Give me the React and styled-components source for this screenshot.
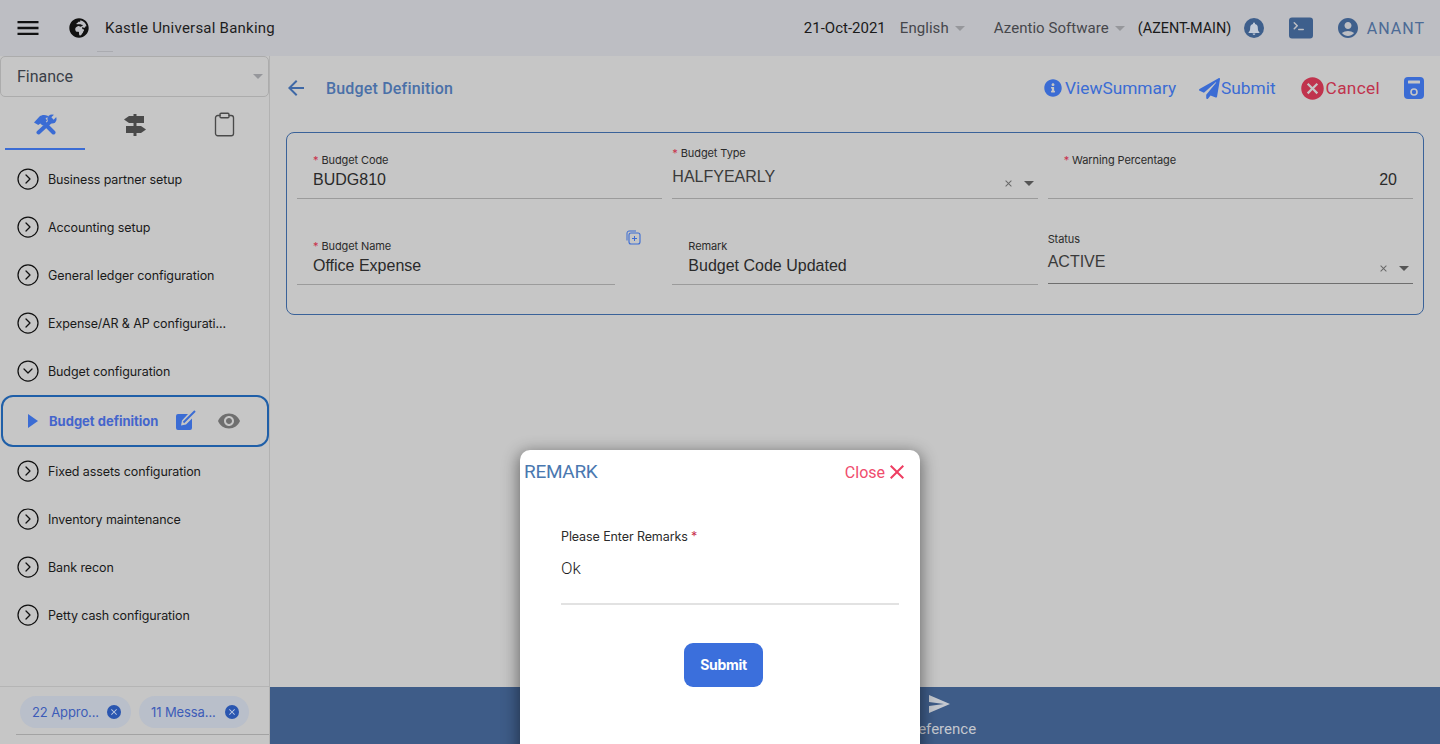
import React from "react";
import styled, { createGlobalStyle } from "styled-components";
import { FaGlobeAfrica, FaInfoCircle, FaPaperPlane } from "react-icons/fa";
import { MdMenu, MdCancel, MdVisibility, MdAccountCircle, MdSend, MdArrowBack, MdClose } from "react-icons/md";
import { BsTerminalFill } from "react-icons/bs";
import { CircleChevronRight, CircleChevronDown, Clipboard } from "lucide-react";

const Global = createGlobalStyle`
  html, body { margin: 0; padding: 0; height: 100%; overflow: hidden; }
  body { font-family: Roboto, "Liberation Sans", sans-serif; background: #c6c6c6; }
  * { box-sizing: border-box; }
`;

const menuTop = [
  "Business partner setup",
  "Accounting setup",
  "General ledger configuration",
  "Expense/AR & AP configurati...",
];
const menuBottom = [
  "Fixed assets configuration",
  "Inventory maintenance",
  "Bank recon",
  "Petty cash configuration",
];

function Caret() {
  return <CaretMark />;
}

function SaveIcon() {
  return (
    <svg width="22" height="24" viewBox="0 0 22 24">
      <rect x="1" y="1" width="20" height="22" rx="4" fill="#3b6cd4" />
      <rect x="5" y="4.5" width="12" height="3" rx="0.5" fill="#c6c6c6" />
      <circle cx="11" cy="16" r="3" fill="none" stroke="#c6c6c6" strokeWidth="1.6" />
    </svg>
  );
}

function EditIcon() {
  return (
    <svg width="22" height="22" viewBox="0 0 22 22">
      <path d="M3 4h10l-6 6.500-1 5 5-1 6-6V18a2 2 0 0 1-2 2H3a2 2 0 0 1-2-2V6a2 2 0 0 1 2-2z" fill="#3b6cd4" />
      <path d="M8.500 12.500 20 1" stroke="#3b6cd4" strokeWidth="2" fill="none" />
    </svg>
  );
}

function CopyAddIcon() {
  return (
    <svg width="15" height="15" viewBox="0 0 15 15" fill="none" stroke="#3b6cd4">
      <path d="M1 10.500V3a2 2 0 0 1 2-2h7" strokeWidth="1" />
      <rect x="3" y="3" width="11" height="11" rx="2" strokeWidth="1.100" />
      <path d="M8.500 6v5M6 8.500h5" strokeWidth="1" />
    </svg>
  );
}

// hammer crossed with an open wrench
function ToolsIcon() {
  return (
    <svg width="24" height="21" viewBox="0 0 24 21">
      <path d="M10 8 20.500 18.500" stroke="#3b6cd4" strokeWidth="4" strokeLinecap="round" />
      <path d="M1 8.500 6.500 2.500C9 .5 12 .5 15 2l.5 1.200-3 .8 1.500 2.500-4.500 5-2.200-2-2 1.500z" fill="#3b6cd4" />
      <path d="M18 7 5.500 18.500" stroke="#3b6cd4" strokeWidth="4" strokeLinecap="round" />
      <circle cx="19" cy="5" r="4.600" fill="#3b6cd4" />
      <path d="M19.500 4.500 23.500 .5" stroke="#c6c6c6" strokeWidth="3.200" />
    </svg>
  );
}

function SignsIcon() {
  return (
    <svg width="24" height="22" viewBox="0 0 24 22" fill="#4a4a4a">
      <rect x="10.500" y="0" width="3" height="22" />
      <path d="M1 5.500 6 2h15v7H6z" />
      <path d="M3 12h15l5 3.500-5 3.500H3z" />
    </svg>
  );
}

function ChipClose() {
  return (
    <ChipDot>
      <MdClose size={10} color="#c6d0e6" />
    </ChipDot>
  );
}

export default function App() {
  return (
    <Page>
      <Global />
      <Header>
        <MdMenu size={28} color="#111" />
        <Globe>
          <FaGlobeAfrica size={20} color="#111" />
        </Globe>
        <Brand>Kastle Universal Banking</Brand>
        <BrandTick />
        <HeaderRight>
          <DateText>21-Oct-2021</DateText>
          <HeaderSelect $width="94px">
            English
            <Caret />
          </HeaderSelect>
          <HeaderSelect $width="144px">
            Azentio Software
            <Caret />
          </HeaderSelect>
          <Branch>(AZENT-MAIN)</Branch>
          <BellDot>
            <svg width="12" height="13" viewBox="0 0 12 13">
              <path d="M6 0.500a1 1 0 0 1 1 1v.4a3.800 3.800 0 0 1 2.800 3.700c0 3 .6 3.800 1.600 4.700v.7H.6v-.7c1-.9 1.600-1.700 1.600-4.700A3.800 3.800 0 0 1 5 1.900v-.4a1 1 0 0 1 1-1zM4.600 11.500h2.800a1.400 1.400 0 0 1-2.800 0z" fill="#c3cbd8" />
            </svg>
          </BellDot>
          <TerminalIcon>
            <BsTerminalFill size={24} color="#3e5f8c" />
          </TerminalIcon>
          <MdAccountCircle size={24} color="#3e5f8c" />
          <UserName>ANANT</UserName>
        </HeaderRight>
      </Header>

      <Body>
        <Sidebar>
          <ModuleSelect>
            Finance
            <Caret />
          </ModuleSelect>
          <Tabs>
            <Tab $active $width="80px">
              <ToolsIcon />
            </Tab>
            <Tab $width="100px">
              <SignsIcon />
            </Tab>
            <Tab $width="78px">
              <Clipboard size={27} color="#4a4a4a" strokeWidth={1.2} />
            </Tab>
          </Tabs>
          <Menu>
            {menuTop.map((item) => (
              <MenuItem key={item}>
                <CircleChevronRight size={24} strokeWidth={1.25} color="#111" />
                {item}
              </MenuItem>
            ))}
            <MenuItem>
              <CircleChevronDown size={24} strokeWidth={1.25} color="#111" />
              Budget configuration
            </MenuItem>
            <ActiveItem>
              <PlayMark />
              <ActiveLabel>Budget definition</ActiveLabel>
              <EditIcon />
              <EyeSlot>
                <MdVisibility size={24} color="#6f6f6f" />
              </EyeSlot>
            </ActiveItem>
            {menuBottom.map((item) => (
              <MenuItem key={item}>
                <CircleChevronRight size={24} strokeWidth={1.25} color="#111" />
                {item}
              </MenuItem>
            ))}
          </Menu>
          <SideFooter>
            <Chips>
              <Chip $width="111px">
                22 Appro...
                <ChipClose />
              </Chip>
              <Chip $width="110px">
                11 Messa...
                <ChipClose />
              </Chip>
            </Chips>
            <FooterRule />
          </SideFooter>
        </Sidebar>

        <Main>
          <TitleRow>
            <BackSlot>
              <MdArrowBack size={24} color="#3e68a6" />
            </BackSlot>
            <Title>Budget Definition</Title>
            <Actions>
              <Action $gap="3px">
                <FaInfoCircle size={18} />
                ViewSummary
              </Action>
              <Action $gap="1px">
                <FaPaperPlane size={21} />
                Submit
              </Action>
              <Action $danger $gap="0px">
                <MdCancel size={27} color="#c0334d" />
                Cancel
              </Action>
              <SaveIcon />
            </Actions>
          </TitleRow>

          <Card>
            <Field>
              <Label $top="14px" $indent="16px">
                <Star>*</Star> Budget Code
              </Label>
              <Value $indent="16px">BUDG810</Value>
            </Field>
            <Field>
              <Label $top="7px">
                <Star>*</Star> Budget Type
              </Label>
              <SelectValue>HALFYEARLY</SelectValue>
              <SelectIcons>
                <MdClose size={11} color="#666" />
                <SmallCaret />
              </SelectIcons>
            </Field>
            <Field>
              <Label $top="14px" $indent="16px">
                <Star>*</Star> Warning Percentage
              </Label>
              <Value $right>20</Value>
            </Field>
            <Field $short>
              <Label $top="14px" $indent="16px">
                <Star>*</Star> Budget Name
              </Label>
              <Value $indent="16px">Office Expense</Value>
              <CopyButton>
                <CopyAddIcon />
              </CopyButton>
            </Field>
            <Field>
              <Label $top="14px" $indent="16px">
                Remark
              </Label>
              <Value $indent="16px">Budget Code Updated</Value>
            </Field>
            <Field $strong>
              <Label $top="7px">Status</Label>
              <SelectValue>ACTIVE</SelectValue>
              <SelectIcons>
                <MdClose size={11} color="#666" />
                <SmallCaret />
              </SelectIcons>
            </Field>
          </Card>

          <BottomBar>
            <BarItem>
              <BarIcon size={24} color="#c4c8cf" />
              Reference
            </BarItem>
          </BottomBar>
        </Main>
      </Body>

      <Modal>
        <ModalHead>
          <ModalTitle>REMARK</ModalTitle>
          <CloseLink>
            Close
            <MdClose size={24} color="#ee3e62" />
          </CloseLink>
        </ModalHead>
        <ModalBody>
          <ModalLabel>
            Please Enter Remarks <Star>*</Star>
          </ModalLabel>
          <ModalValue>Ok</ModalValue>
          <ModalSubmit>Submit</ModalSubmit>
        </ModalBody>
      </Modal>
    </Page>
  );
}

const Page = styled.div`
  position: relative;
  width: 1440px;
  height: 744px;
  overflow: hidden;
  display: flex;
  flex-direction: column;
  background: #c6c6c6;
  color: #1c1c1c;
`;

const Header = styled.header`
  position: relative;
  flex: 0 0 56px;
  display: flex;
  align-items: center;
  padding-left: 14px;
  background: #bdbec3;
`;

const Globe = styled.span`
  display: flex;
  margin-left: 27px;
`;

const Brand = styled.span`
  margin-left: 16px;
  font-size: 15px;
  letter-spacing: 0.23px;
  color: #1d1d1d;
`;

const BrandTick = styled.i`
  position: absolute;
  left: 97px;
  bottom: 4px;
  width: 16px;
  height: 1px;
  background: #aaabb0;
`;

const HeaderRight = styled.div`
  margin-left: auto;
  display: flex;
  align-items: center;
  padding-right: 15px;
`;

const DateText = styled.span`
  width: 96px;
  font-size: 15px;
  color: #1a1a1a;
`;

const HeaderSelect = styled.span`
  width: ${(p) => p.$width};
  display: flex;
  align-items: center;
  gap: 6px;
  font-size: 15px;
  letter-spacing: 0.05px;
  color: #46474b;
`;

const CaretMark = styled.i`
  display: inline-block;
  width: 0;
  height: 0;
  border-left: 5px solid transparent;
  border-right: 5px solid transparent;
  border-top: 5px solid #96979b;
`;

const Branch = styled.span`
  width: 106px;
  font-size: 14.4px;
  white-space: nowrap;
  color: #1a1a1a;
`;

const BellDot = styled.span`
  width: 20px;
  height: 20px;
  border-radius: 50%;
  background: #3e5f8c;
  display: flex;
  align-items: center;
  justify-content: center;
`;

const TerminalIcon = styled.span`
  display: flex;
  margin: 0 23px 0 25px;
`;

const UserName = styled.span`
  margin-left: 7px;
  font-size: 16px;
  letter-spacing: 1px;
  color: #4c6b96;
`;

const Body = styled.div`
  flex: 1;
  display: flex;
  min-height: 0;
`;

const Sidebar = styled.aside`
  flex: 0 0 270px;
  display: flex;
  flex-direction: column;
  border-right: 1px solid #b2b2b2;
`;

const ModuleSelect = styled.div`
  flex: 0 0 41px;
  display: flex;
  align-items: center;
  justify-content: space-between;
  padding: 0 5px 0 16px;
  border: 1px solid #acacac;
  border-radius: 5px;
  font-size: 16px;
  color: #3a3f48;
`;

const Tabs = styled.div`
  flex: 0 0 53px;
  display: flex;
  padding: 0 0 0 5px;
  margin-bottom: 5px;
`;

const Tab = styled.div`
  width: ${(p) => p.$width};
  display: flex;
  align-items: center;
  justify-content: center;
  padding-top: 4px;
  border-bottom: 2px solid ${(p) => (p.$active ? "#3b6cd4" : "transparent")};
`;

const Menu = styled.nav`
  display: flex;
  flex-direction: column;
  flex: 1;
`;

const MenuItem = styled.div`
  height: 48px;
  display: flex;
  align-items: center;
  gap: 8px;
  padding-left: 16px;
  font-family: Inter, Roboto, sans-serif;
  font-size: 12.5px;
  letter-spacing: -0.1px;
  color: #1a1a1a;
  white-space: nowrap;
`;

const ActiveItem = styled.div`
  height: 52px;
  margin-left: 1px;
  display: flex;
  align-items: center;
  padding-left: 25px;
  border: 2px solid #1f5fa8;
  border-radius: 12px;
  width: 268px;
`;

const PlayMark = styled.i`
  width: 0;
  height: 0;
  border-top: 7px solid transparent;
  border-bottom: 7px solid transparent;
  border-left: 10px solid #3b6cd4;
`;

const ActiveLabel = styled.span`
  width: 126px;
  margin-left: 11px;
  font-family: Inter, Roboto, sans-serif;
  font-size: 13px;
  font-weight: 700;
  color: #4465cc;
  white-space: nowrap;
`;

const EyeSlot = styled.span`
  display: flex;
  margin-left: 20px;
`;

const SideFooter = styled.div`
  flex: 0 0 58px;
  display: flex;
  flex-direction: column;
  border-top: 1px solid #b5b5b5;
  padding-top: 9px;
`;

const Chips = styled.div`
  display: flex;
  gap: 8px;
  padding-left: 20px;
`;

const Chip = styled.span`
  width: ${(p) => p.$width};
  height: 32px;
  padding: 0 10px 0 12px;
  display: flex;
  align-items: center;
  justify-content: space-between;
  border-radius: 16px;
  background: #b9bfca;
  font-family: Inter, Roboto, sans-serif;
  font-size: 13px;
  letter-spacing: -0.1px;
  color: #3d5cb8;
  white-space: nowrap;
`;

const ChipDot = styled.span`
  width: 14px;
  height: 14px;
  border-radius: 50%;
  background: #2a56b0;
  display: flex;
  align-items: center;
  justify-content: center;
`;

const FooterRule = styled.i`
  height: 1px;
  margin: 6px 0 0 16px;
  background: #a3a3a3;
`;

const Main = styled.main`
  flex: 1;
  display: flex;
  flex-direction: column;
  min-width: 0;
`;

const TitleRow = styled.div`
  flex: 0 0 64px;
  display: flex;
  align-items: center;
  padding: 0 15px 0 14px;
`;

const BackSlot = styled.span`
  display: flex;
`;

const Title = styled.h1`
  margin: 0 0 0 18px;
  font-size: 16px;
  font-weight: 500;
  letter-spacing: 0.18px;
  color: #4a70a8;
`;

const Actions = styled.div`
  margin-left: auto;
  display: flex;
  align-items: center;
  gap: 23px;
`;

const Action = styled.span`
  display: flex;
  align-items: center;
  gap: ${(p) => p.$gap};
  font-size: 17.3px;
  letter-spacing: ${(p) => (p.$danger ? "0.3px" : "0")};
  color: ${(p) => (p.$danger ? "#c0334d" : "#3b6cd4")};
`;

const Card = styled.section`
  flex: 0 0 183px;
  margin: 12px 16px 0;
  padding: 6px 10px 0;
  border: 1px solid #3a6299;
  border-radius: 8px;
  display: grid;
  grid-template-columns: repeat(3, 1fr);
  grid-template-rows: 60px 60px;
  column-gap: 10px;
  row-gap: 26px;
`;

const Field = styled.div`
  position: relative;
  border-bottom: 1px solid ${(p) => (p.$strong ? "#6e6e6e" : "#9b9b9b")};
  margin-right: ${(p) => (p.$short ? "47px" : "0")};
  margin-bottom: ${(p) => (p.$strong ? "1px" : "0")};
`;

const Label = styled.div`
  position: absolute;
  left: ${(p) => p.$indent || "0"};
  top: ${(p) => p.$top};
  font-family: Inter, Roboto, sans-serif;
  font-size: 11px;
  line-height: 14px;
  letter-spacing: -0.1px;
  color: #2b2b2b;
  white-space: nowrap;
`;

const Star = styled.span`
  color: #c9304c;
`;

const Value = styled.div`
  position: absolute;
  bottom: 8px;
  left: ${(p) => (p.$right ? "auto" : p.$indent || "0")};
  right: ${(p) => (p.$right ? "16px" : "auto")};
  font-family: "Liberation Sans", Arial, sans-serif;
  font-size: 16px;
  line-height: 20px;
  color: #2a2a2a;
`;

const SelectValue = styled(Value)`
  bottom: 11px;
  color: #3a3a3a;
`;

const SelectIcons = styled.div`
  position: absolute;
  right: 4px;
  bottom: 9px;
  display: flex;
  align-items: center;
  gap: 10px;
`;

const SmallCaret = styled.i`
  width: 0;
  height: 0;
  border-left: 5px solid transparent;
  border-right: 5px solid transparent;
  border-top: 5px solid #555;
`;

const CopyButton = styled.span`
  position: absolute;
  right: -26px;
  top: 5px;
  display: flex;
`;

const BottomBar = styled.footer`
  margin-top: auto;
  flex: 0 0 57px;
  display: flex;
  justify-content: center;
  padding-left: 175px;
  background: #3e5c88;
`;

const BarItem = styled.div`
  display: flex;
  flex-direction: column;
  align-items: center;
  gap: 5px;
  font-size: 15px;
  line-height: 16px;
  padding-top: 5px;
  color: #c4c8cf;
`;

const BarIcon = styled(MdSend)`
  margin-right: 7px;
`;

const Modal = styled.div`
  position: absolute;
  left: 520px;
  top: 450px;
  width: 400px;
  height: 310px;
  background: #fff;
  border-radius: 10px;
  box-shadow: 0 4px 16px 2px rgba(0, 0, 0, 0.45);
`;

const ModalHead = styled.div`
  display: flex;
  align-items: center;
  justify-content: space-between;
  height: 44px;
  padding: 0 11px 0 4px;
`;

const ModalTitle = styled.span`
  margin-top: -1px;
  font-size: 19px;
  letter-spacing: -0.3px;
  color: #4a78b0;
`;

const CloseLink = styled.span`
  display: flex;
  align-items: center;
  font-size: 16px;
  color: #ef4d6d;
`;

const ModalBody = styled.div`
  display: flex;
  flex-direction: column;
  align-items: center;
  padding: 35px 21px 0 41px;
`;

const ModalLabel = styled.div`
  align-self: flex-start;
  font-family: Inter, Roboto, sans-serif;
  font-size: 12.5px;
  line-height: 16px;
  letter-spacing: -0.1px;
  color: #2b2b2b;
`;

const ModalValue = styled.div`
  align-self: stretch;
  height: 60px;
  padding-top: 13px;
  border-bottom: 2px solid #e2e2e2;
  font-size: 17px;
  font-weight: 300;
  line-height: 20px;
  color: #1c1c1c;
`;

const ModalSubmit = styled.button`
  width: 79px;
  height: 44px;
  margin-top: 38px;
  margin-right: 13px;
  padding: 0 0 2px;
  border: 0;
  border-radius: 9px;
  background: #3b6fdc;
  font-family: Inter, Roboto, sans-serif;
  font-size: 14px;
  font-weight: 700;
  letter-spacing: -0.3px;
  color: #fff;
`;
